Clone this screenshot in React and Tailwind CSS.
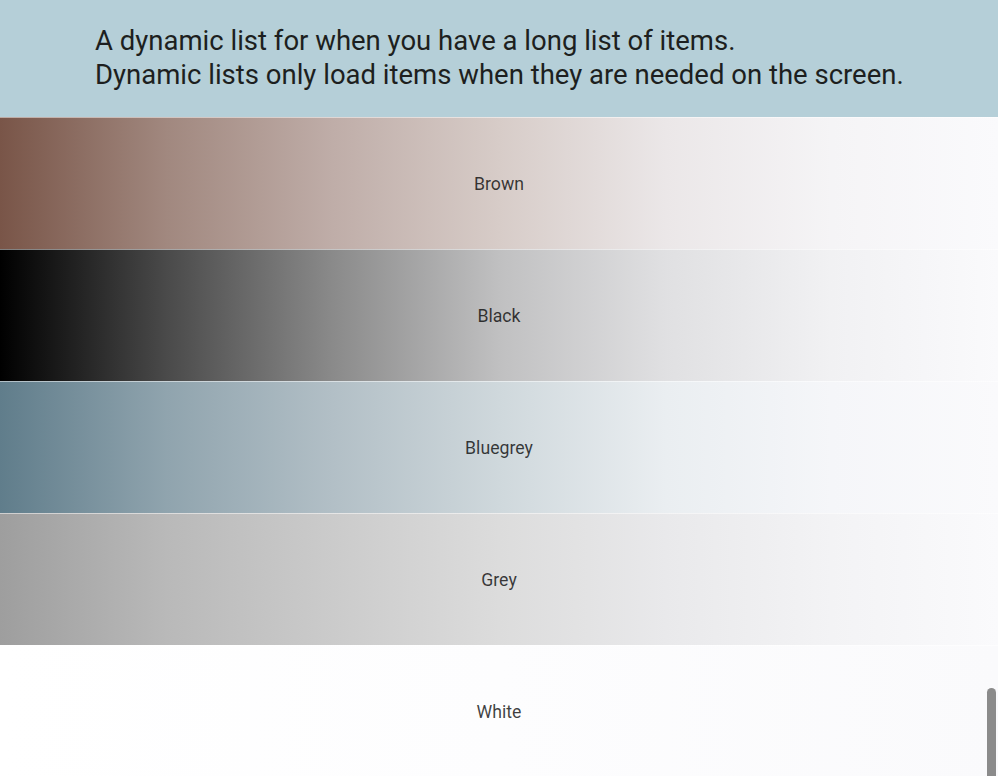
import React from 'react'

const colors = [
  {
    name: 'Brown',
    bg: 'bg-[linear-gradient(to_right,#795548_0%,#a1887f_16.7%,#bfada8_33.3%,#d7ccc8_50%,#ebe7e8_66.7%,#f5f4f6_83.3%,#fafafc_100%)]',
  },
  {
    name: 'Black',
    bg: 'bg-[linear-gradient(to_right,#000000_0%,#4a4a4a_16.7%,#8a8a8a_33.3%,#c0c0c1_50%,#e0e0e2_66.7%,#f1f1f3_83.3%,#fafafc_100%)]',
  },
  {
    name: 'Bluegrey',
    bg: 'bg-[linear-gradient(to_right,#607d8b_0%,#90a4ae_16.7%,#b2bfc6_33.3%,#cfd8dc_50%,#eaeef1_66.7%,#f5f6f9_83.3%,#fafafc_100%)]',
  },
  {
    name: 'Grey',
    bg: 'bg-[linear-gradient(to_right,#9e9e9e_0%,#b9b9b9_16.7%,#cbcbcb_33.3%,#dcdcdc_50%,#e9e9eb_66.7%,#f3f3f5_83.3%,#fafafc_100%)]',
  },
  {
    name: 'White',
    bg: 'bg-[linear-gradient(to_right,#ffffff_0%,#fdfdfe_50%,#fafafc_100%)]',
  },
]

const ColorRow = ({ name, bg }) => (
  <div
    className={`${bg} h-[132px] shrink-0 border-t border-white/50 flex items-center justify-center`}
  >
    <span className="text-[17.7px] leading-none text-black/75 translate-y-[1px]">{name}</span>
  </div>
)

export default function App() {
  return (
    <div
      className="relative h-screen overflow-hidden bg-white"
      style={{ fontFamily: 'Roboto, "Liberation Sans", sans-serif' }}
    >
      <header className="h-[117px] bg-[#b5cfd8] pl-[95px] pt-[24px] text-[27.5px] leading-[34px] text-[#1d1f20]">
        <p>A dynamic list for when you have a long list of items.</p>
        <p>Dynamic lists only load items when they are needed on the screen.</p>
      </header>

      <div className="flex flex-col">
        {colors.map((c) => (
          <ColorRow key={c.name} name={c.name} bg={c.bg} />
        ))}
      </div>

      {/* scroll thumb */}
      <div className="absolute right-[2px] top-[688px] h-[100px] w-[9px] rounded-full bg-[#8b8b8b]" />
    </div>
  )
}
